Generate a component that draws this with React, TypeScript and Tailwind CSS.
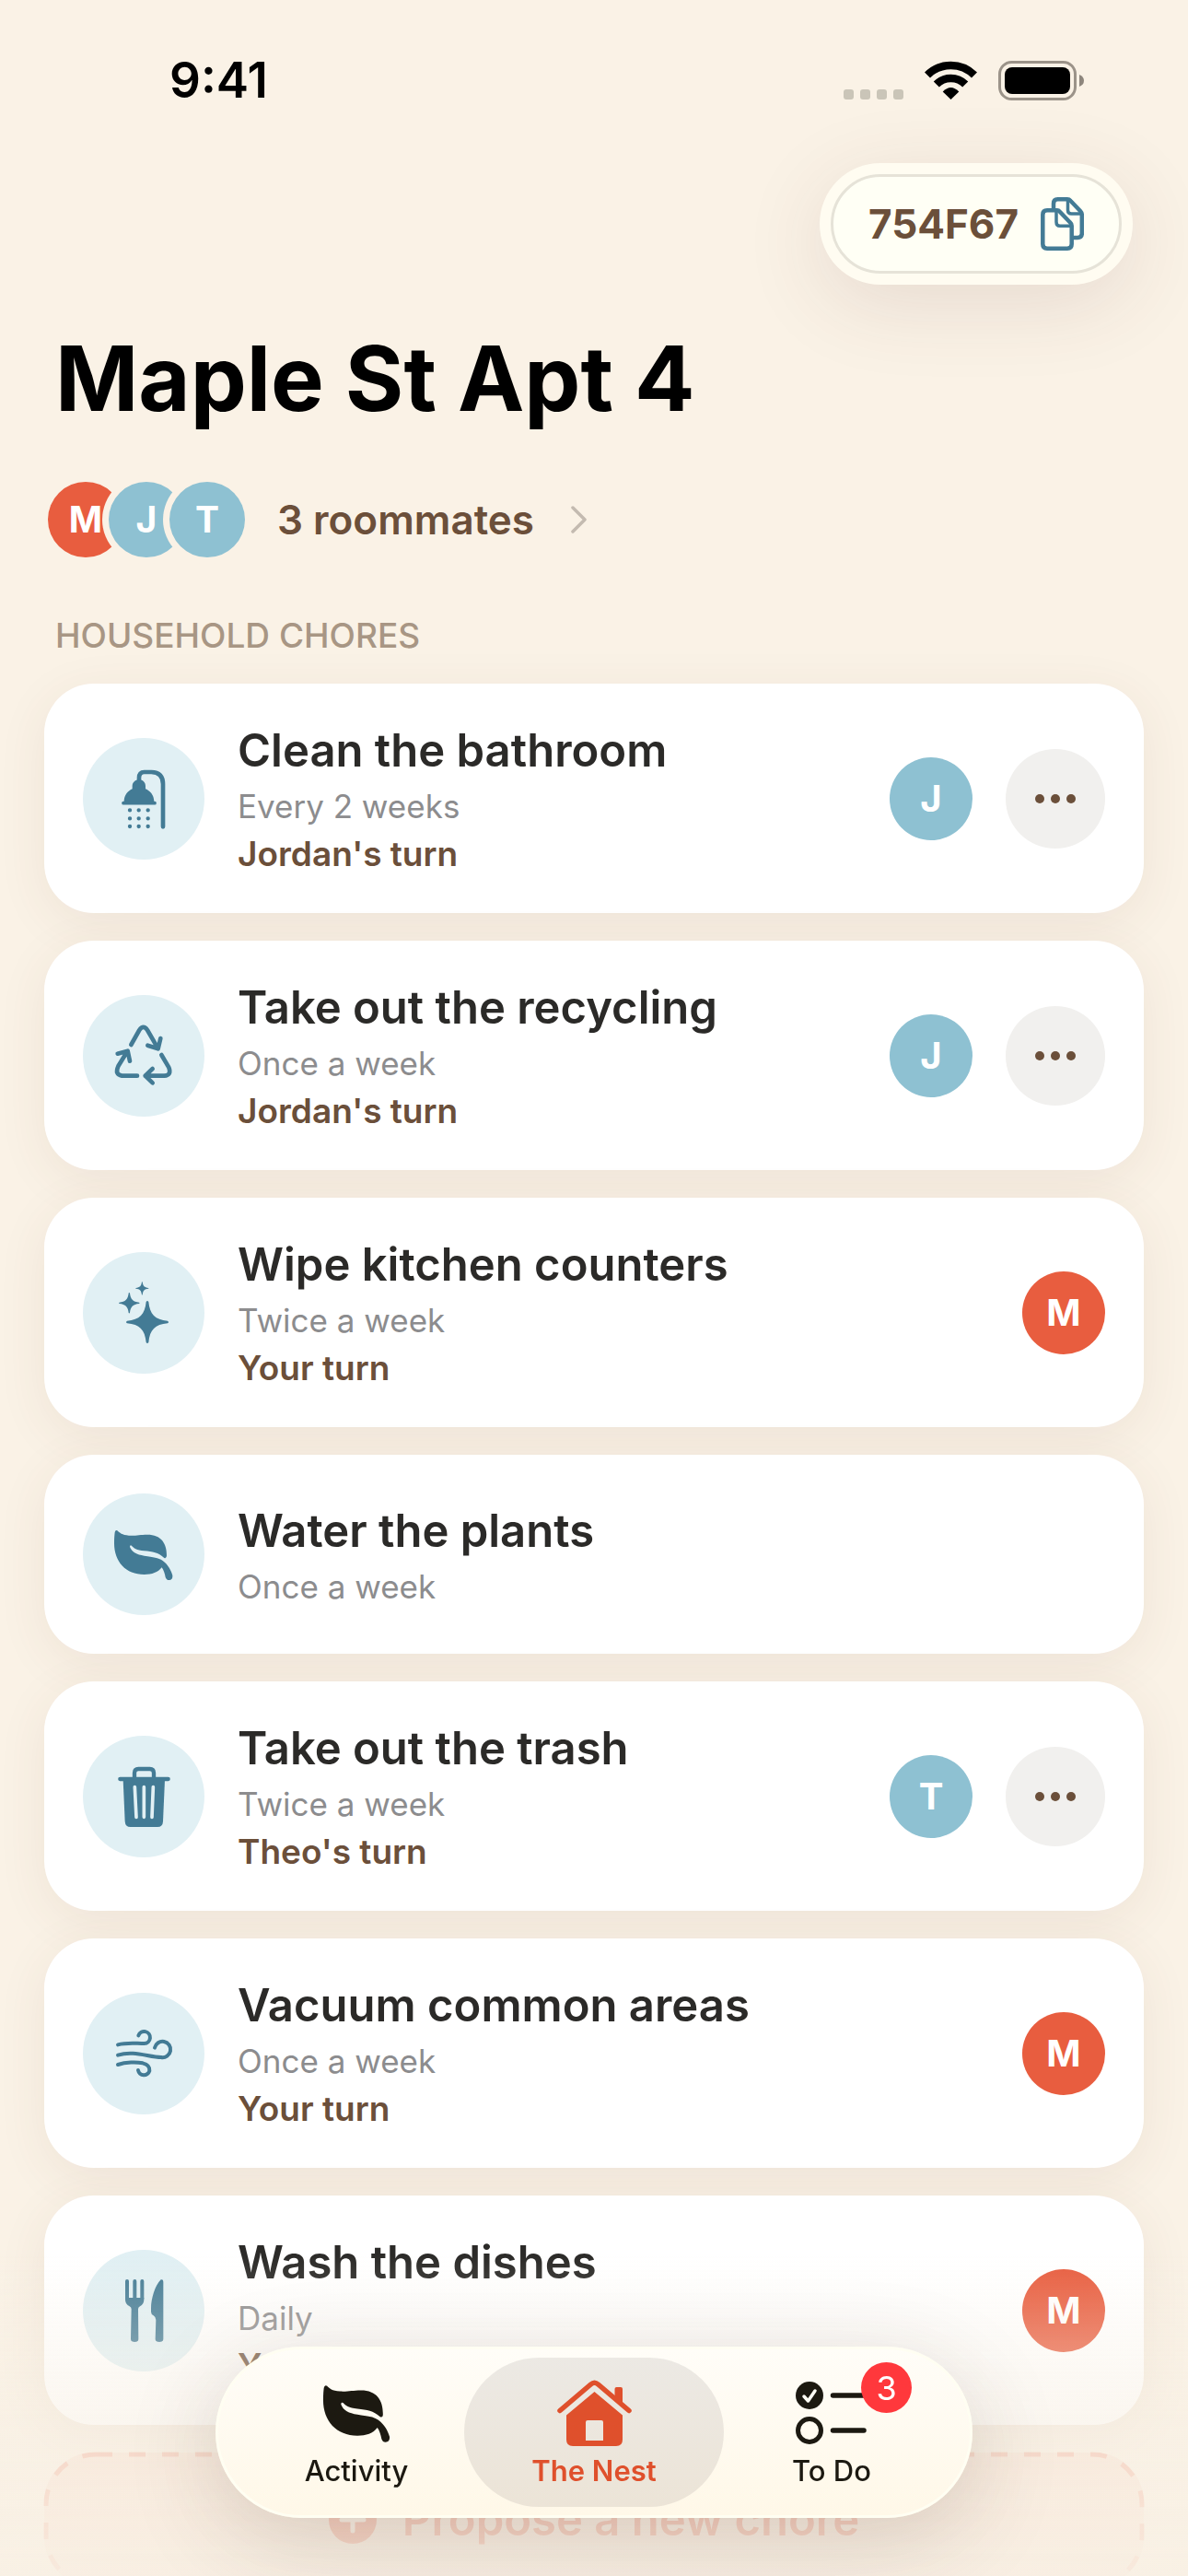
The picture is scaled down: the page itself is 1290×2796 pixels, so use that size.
import type { ReactNode } from "react";

type Person = { initial: string; color: string };

type Chore = {
  title: string;
  schedule: string;
  turn?: string;
  assignee?: Person;
  menu?: boolean;
  icon: ReactNode;
};

const ME: Person = { initial: "M", color: "bg-[#e85d3f]" };
const JORDAN: Person = { initial: "J", color: "bg-[#8ec1d2]" };
const THEO: Person = { initial: "T", color: "bg-[#8ec1d2]" };

const LEAF_PATH =
  "M12 4C20 11 27 19 50 20C75 21 85 17 110 17C155 17 173 45 173 85Q173 96 165 93C145 75 128 73 100 70C75 68 65 60 59 53Q53 50 53 57C60 75 75 82 100 86C130 91 145 91 160 102C178 115 188 135 192 150Q193 163 183 165Q173 167 169 156C167 145 163 132 157 124C145 140 125 147 100 147C40 147 2 105 2 45C2 28 3 18 4 10Q6 0 14 5Z";

const STAR_PATH =
  "M-4-66Q0-72 4-66C8-25 25-8 66-4Q72 0 66 4C25 8 8 25 4 66Q0 72-4 66C-8 25-25 8-66 4Q-72 0-66-4C-25-8-8-25-4-66Z";

// Chore icons share a 396 unit canvas, three units to the pixel.
function ChoreIcon({ children }: { children: ReactNode }) {
  return (
    <span className="size-[132px] shrink-0 rounded-full bg-[#e1f0f4] text-[#437b95]">
      <svg
        viewBox="0 0 396 396"
        className="size-full"
        fill="none"
        stroke="currentColor"
        strokeLinecap="round"
        strokeLinejoin="round"
        aria-hidden="true"
      >
        {children}
      </svg>
    </span>
  );
}

const shower = (
  <ChoreIcon>
    <path d="M183 142V130Q183 111 200 111H223Q261 112 261 150V289" strokeWidth="14" />
    <path
      d="M134 208C134 185 148 172 161 166V157C161 144 171 136 183 136S204 144 204 157V166C218 172 232 185 232 208Z"
      fill="currentColor"
      stroke="none"
    />
    <path d="M132 212H234" strokeWidth="11" />
    <path
      d="M153 235h.1M182 235h.1M212 235h.1M153 262h.1M182 262h.1M212 262h.1M153 288h.1M182 288h.1M212 288h.1"
      strokeWidth="13"
    />
  </ChoreIcon>
);

const recycle = (
  <ChoreIcon>
    <g strokeWidth="14">
      <path d="M157 162L184 114Q197 95 210 114L244 173M211 164L245 175L253 141" />
      <path d="M256 195L280 236Q290 261 265 263H203M227 240L203 263L227 286" />
      <path d="M177 263H127Q103 259 115 232L145 183M113 191L146 182L153 215" />
    </g>
  </ChoreIcon>
);

const sparkles = (
  <ChoreIcon>
    <g fill="currentColor" stroke="none">
      <path d={STAR_PATH} transform="translate(210 228)" />
      <path d={STAR_PATH} transform="translate(151 166) scale(.49)" />
      <path d={STAR_PATH} transform="translate(193 118) scale(.31)" />
    </g>
  </ChoreIcon>
);

const leaf = (
  <ChoreIcon>
    <path d={LEAF_PATH} transform="translate(100 117)" fill="currentColor" stroke="none" />
  </ChoreIcon>
);

const trash = (
  <ChoreIcon>
    <path d="M168 140V121Q168 108 181 108H218Q231 108 231 121V140M121 141H278" strokeWidth="13" />
    <path
      d="M131 143H267L261 279Q260 297 243 297H155Q138 297 137 279Z"
      fill="currentColor"
      stroke="none"
    />
    <path d="M169 167L174 265M199 167V265M229 167L225 265" stroke="#e1f0f4" strokeWidth="11" />
  </ChoreIcon>
);

const wind = (
  <ChoreIcon>
    <g strokeWidth="12">
      <path d="M114 169C143 161 170 165 200 165A19.500 19.500 0 1 0 181 139" />
      <path d="M114 203C165 186 215 210 255 210A26 26 0 1 0 234 179" />
      <path d="M114 234C140 225 175 225 195 229C212 233 218 243 217 254A19 19 0 0 1 180 252" />
    </g>
  </ChoreIcon>
);

const cutlery = (
  <ChoreIcon>
    <g fill="currentColor" stroke="none">
      <path d="M138 156H199V162Q199 178 186 184Q180 187 180 193L181 290Q181 300 169 300Q156 300 156 290L158 193Q158 187 152 184Q138 178 138 162Z" />
      <path d="M262 104Q262 95 254 97C235 115 222 160 222 190V202Q222 210 230 214Q238 219 238 228L236 290Q236 300 249 300Q262 300 262 290Z" />
    </g>
    <path d="M144 102V158M169 102V158M193 102V158" strokeWidth="12" />
  </ChoreIcon>
);

const CHORES: Chore[] = [
  { title: "Clean the bathroom", schedule: "Every 2 weeks", turn: "Jordan's turn", assignee: JORDAN, menu: true, icon: shower },
  { title: "Take out the recycling", schedule: "Once a week", turn: "Jordan's turn", assignee: JORDAN, menu: true, icon: recycle },
  { title: "Wipe kitchen counters", schedule: "Twice a week", turn: "Your turn", assignee: ME, icon: sparkles },
  { title: "Water the plants", schedule: "Once a week", icon: leaf },
  { title: "Take out the trash", schedule: "Twice a week", turn: "Theo's turn", assignee: THEO, menu: true, icon: trash },
  { title: "Vacuum common areas", schedule: "Once a week", turn: "Your turn", assignee: ME, icon: wind },
  { title: "Wash the dishes", schedule: "Daily", turn: "Your turn", assignee: ME, icon: cutlery },
];

function StatusBar() {
  return (
    <div className="mt-[54px] flex h-[66px] items-center justify-between pr-[113px] pl-[184px] text-black">
      <span className="text-[53px] leading-[66px] font-semibold">9:41</span>
      <div className="flex h-[43px] items-end">
        <div className="flex gap-[7px] pb-px">
          {[0, 1, 2, 3].map((i) => (
            <span key={i} className="size-[11px] rounded-[3px] bg-[#cac5b8]" />
          ))}
        </div>
        <svg viewBox="0 0 57 42" className="ml-[23px] h-[42px] w-[57px] self-start" aria-hidden="true">
          <path d="M3 15.500A36 36 0 0 1 54 15.500" fill="none" stroke="currentColor" strokeWidth="8.500" />
          <path d="M12.800 25.500A22 22 0 0 1 44.200 25.500" fill="none" stroke="currentColor" strokeWidth="8.500" />
          <path d="M28.500 42L19.700 33.500Q28.500 24.500 37.300 33.500Z" fill="currentColor" />
        </svg>
        <svg viewBox="0 0 93 43" className="ml-[23px] h-[43px] w-[93px]" aria-hidden="true">
          <rect x="1.500" y="1.500" width="82" height="40" rx="13" fill="none" stroke="#9b9389" strokeWidth="3" />
          <rect x="7" y="7" width="71" height="29" rx="8" fill="currentColor" />
          <path d="M88 15Q93 17 93 21.500T88 28Z" fill="#8d867d" />
        </svg>
      </div>
    </div>
  );
}

function CopyIcon() {
  return (
    <svg
      viewBox="0 0 47 58"
      className="h-[58px] w-[47px] text-[#437b95]"
      fill="none"
      stroke="currentColor"
      strokeWidth="4.500"
      strokeLinejoin="round"
      aria-hidden="true"
    >
      <path d="M14 14V7Q14 2.300 18.500 2.300H29Q31 2.300 32.500 4L43 15Q44.800 17 44.800 19V39.500Q44.800 44 40 44H35" />
      <path d="M29.500 3V14Q29.500 18 33.500 18H44" strokeWidth="3.500" />
      <path d="M18 14.300H7Q2.300 14.300 2.300 19V51Q2.300 55.700 7 55.700H29Q33.700 55.700 33.700 51V31Q33.700 29 32 27.500L21 16Q19.500 14.300 18 14.300Z" />
      <path d="M17 15V27Q17 31.300 21 31.300H33" strokeWidth="3.500" />
    </svg>
  );
}

function ChoreCard({ chore }: { chore: Chore }) {
  return (
    <li className="flex min-h-[216px] items-center gap-9 rounded-[54px] bg-white px-[42px] py-10 shadow-[0_12px_54px_rgba(107,65,50,0.08)]">
      {chore.icon}
      <div className="flex flex-1 flex-col gap-1">
        <h3 className="text-[49px] leading-[65px] font-semibold text-[#2b2a28]">{chore.title}</h3>
        <p className="text-[35px] leading-[48px] text-[#8c8c8e]">{chore.schedule}</p>
        {chore.turn && (
          <p className="text-[37px] leading-[48px] font-semibold text-[#6b4f3a]">{chore.turn}</p>
        )}
      </div>
      {chore.assignee && (
        <span
          className={`flex size-[90px] items-center justify-center rounded-full text-[40px] font-bold text-white ${chore.assignee.color}`}
        >
          {chore.assignee.initial}
        </span>
      )}
      {chore.menu && (
        <button
          aria-label={`Options for ${chore.title}`}
          className="flex size-[108px] items-center justify-center gap-[7px] rounded-full bg-[#f1f0ee]"
        >
          <span className="size-[10px] rounded-full bg-[#6b4f3a]" />
          <span className="size-[10px] rounded-full bg-[#6b4f3a]" />
          <span className="size-[10px] rounded-full bg-[#6b4f3a]" />
        </button>
      )}
    </li>
  );
}

function ProposeButton() {
  return (
    <button className="relative flex h-[146px] w-full items-center justify-center gap-7 rounded-[54px] bg-[#e85d3f]/10 text-[49px] font-semibold text-[#e85d3f]">
      <svg className="absolute inset-[2px] size-[calc(100%-4px)] overflow-visible" fill="none" aria-hidden="true">
        <rect
          width="100%"
          height="100%"
          rx="54"
          stroke="currentColor"
          strokeOpacity=".35"
          strokeWidth="5"
          strokeDasharray="18 18"
        />
      </svg>
      <svg viewBox="0 0 52 52" className="size-[52px]" aria-hidden="true">
        <circle cx="26" cy="26" r="26" fill="currentColor" />
        <path d="M26 14V38M14 26H38" stroke="#fbeee2" strokeWidth="5" strokeLinecap="round" />
      </svg>
      Propose a new chore
    </button>
  );
}

function TabBar() {
  const tab = "flex h-[162px] w-[282px] flex-col items-center gap-[7px] rounded-full pt-[22px] text-[31px] leading-9";
  return (
    <nav
      aria-label="Main"
      className="pointer-events-auto flex rounded-full border-3 border-[#fffef2] bg-linear-to-b from-[#fffdf8] to-[#fff8e8] p-[9px] shadow-[0_24px_100px_rgba(60,40,30,0.18)]"
    >
      <a href="#activity" className={`${tab} font-medium text-[#1c1911]`}>
        <span className="flex h-[76px] items-center">
          <svg viewBox="0 0 194 166" className="h-[63px] w-[74px]" aria-hidden="true">
            <path d={LEAF_PATH} fill="currentColor" />
          </svg>
        </span>
        Activity
      </a>
      <a
        href="#nest"
        aria-current="page"
        className={`${tab} -mx-6 bg-linear-to-b from-[#ece9e4] to-[#ece4d7] font-semibold text-[#df502c]`}
      >
        <span className="flex h-[76px] items-center">
          <svg viewBox="0 0 81 72" className="h-[72px] w-[81px]" aria-hidden="true">
            <path
              d="M3 33.500L36.500 5Q40.500 1.500 44.500 5L78 33.500"
              fill="none"
              stroke="currentColor"
              strokeWidth="5.500"
              strokeLinecap="round"
            />
            <path d="M62.500 22V10Q62.500 8 64.500 8H69Q71 8 71 10V29Z" fill="currentColor" />
            <path
              d="M40.500 13L71 38.500V65Q71 72 64 72H17Q10 72 10 65V38.500ZM33 44Q31 44 31 46V66H50V46Q50 44 48 44Z"
              fill="currentColor"
              fillRule="evenodd"
            />
          </svg>
        </span>
        The Nest
      </a>
      <a href="#todo" className={`${tab} relative font-medium text-[#1c1911]`}>
        <span className="flex h-[76px] items-center">
          <svg viewBox="0 0 78 70" className="h-[70px] w-[78px]" fill="none" stroke="currentColor" aria-hidden="true">
            <circle cx="15" cy="16" r="15" fill="currentColor" stroke="none" />
            <path d="M9 17L13.500 22L21 11" stroke="#fffdf5" strokeWidth="3.500" strokeLinecap="round" strokeLinejoin="round" />
            <circle cx="15" cy="54" r="12.500" strokeWidth="5" />
            <path d="M40.500 16H74M40.500 54H74" strokeWidth="5.500" strokeLinecap="round" />
          </svg>
        </span>
        To Do
        <span className="absolute top-[5px] left-[173px] flex size-[55px] items-center justify-center rounded-full bg-[#ff383c] text-[36px] font-normal text-white">
          3
        </span>
      </a>
    </nav>
  );
}

export default function App() {
  return (
    <div className="relative h-screen overflow-hidden bg-[#faf2e6] font-['Inter',sans-serif]">
      <StatusBar />

      <header className="mt-[57px] flex flex-col">
        <div className="mr-[60px] self-end rounded-full bg-[#fffcf1] p-3 shadow-[0_20px_90px_rgba(90,50,50,0.12)]">
          <button className="flex h-[108px] items-center gap-6 rounded-full border-3 border-[#e6e3d8] bg-[#fffff5] px-[38px] text-[44px] font-bold text-[#6b4f3a]">
            754F67
            <CopyIcon />
          </button>
        </div>
        <h1 className="mt-[42px] px-[60px] text-[97px] leading-[120px] font-bold text-black">
          Maple St Apt 4
        </h1>
      </header>

      <button className="mt-[45px] flex items-center px-[45px]">
        {[ME, JORDAN, THEO].map((person) => (
          <span key={person.initial} className="-ml-[30px] rounded-full bg-[#faf2e6] p-[7px] first:ml-0">
            <span
              className={`flex size-[82px] items-center justify-center rounded-full text-[39px] font-bold text-white ${person.color}`}
            >
              {person.initial}
            </span>
          </span>
        ))}
        <span className="ml-7 text-[44px] leading-[60px] font-semibold text-[#6b4f3a]">3 roommates</span>
        <svg viewBox="0 0 18 30" className="ml-10 h-[30px] w-[18px]" fill="none" aria-hidden="true">
          <path d="M2 2L15 15L2 28" stroke="#c3bab0" strokeWidth="3.500" strokeLinecap="round" strokeLinejoin="round" />
        </svg>
      </button>

      <main className="px-12">
        <h2 className="mt-[54px] px-3 text-[37px] leading-[48px] font-medium text-[#a89684]">HOUSEHOLD CHORES</h2>
        <ul className="mt-7 mb-[30px] flex flex-col gap-[30px]">
          {CHORES.map((chore) => (
            <ChoreCard key={chore.title} chore={chore} />
          ))}
        </ul>
        <ProposeButton />
      </main>

      {/* the list fades out under the floating tab bar */}
      <div className="pointer-events-none fixed inset-x-0 bottom-0 flex h-[350px] items-end justify-center bg-linear-to-b from-[#f8f0e4]/0 via-[#f8f0e4]/55 to-[#f8f0e4]/90 pb-[63px]">
        <TabBar />
      </div>
    </div>
  );
}
